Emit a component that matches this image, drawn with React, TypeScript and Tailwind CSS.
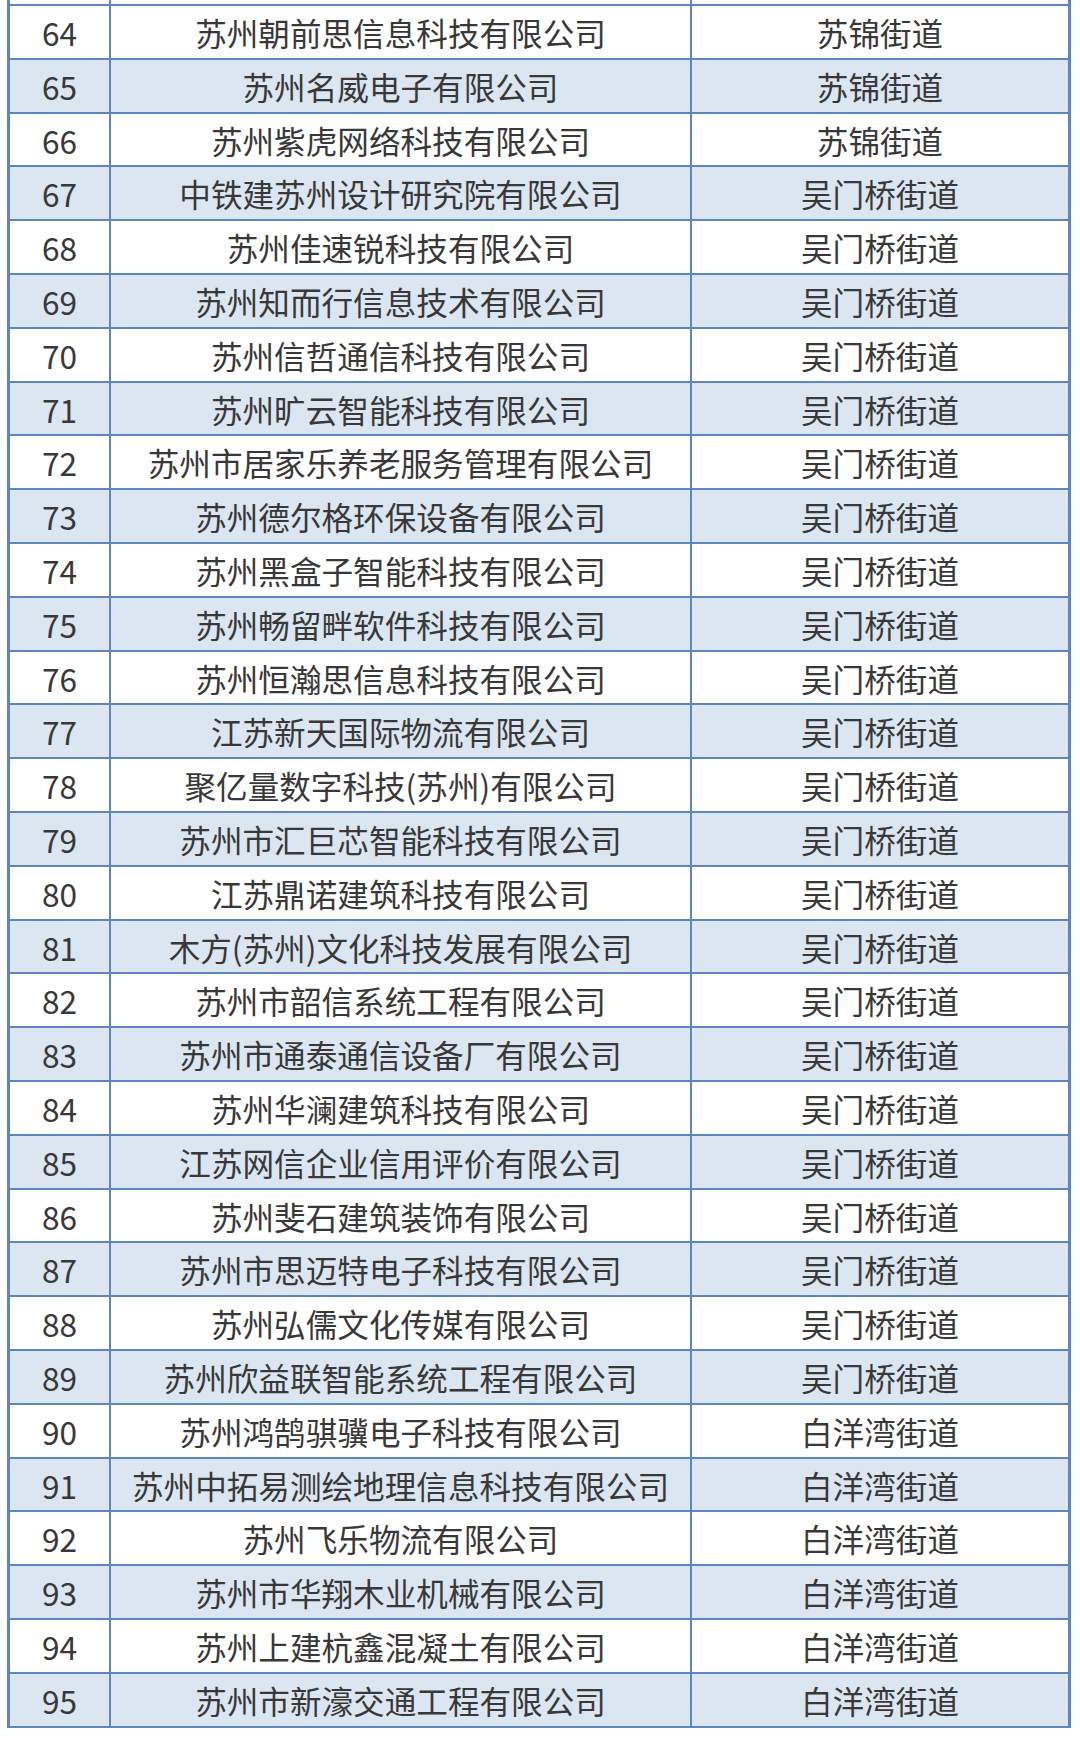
import React from "react";

interface Row {
  no: number;
  name: string;
  street: string;
}

const names: string[] = [
  "苏州朝前思信息科技有限公司",
  "苏州名威电子有限公司",
  "苏州紫虎网络科技有限公司",
  "中铁建苏州设计研究院有限公司",
  "苏州佳速锐科技有限公司",
  "苏州知而行信息技术有限公司",
  "苏州信哲通信科技有限公司",
  "苏州旷云智能科技有限公司",
  "苏州市居家乐养老服务管理有限公司",
  "苏州德尔格环保设备有限公司",
  "苏州黑盒子智能科技有限公司",
  "苏州畅留畔软件科技有限公司",
  "苏州恒瀚思信息科技有限公司",
  "江苏新天国际物流有限公司",
  "聚亿量数字科技(苏州)有限公司",
  "苏州市汇巨芯智能科技有限公司",
  "江苏鼎诺建筑科技有限公司",
  "木方(苏州)文化科技发展有限公司",
  "苏州市韶信系统工程有限公司",
  "苏州市通泰通信设备厂有限公司",
  "苏州华澜建筑科技有限公司",
  "江苏网信企业信用评价有限公司",
  "苏州斐石建筑装饰有限公司",
  "苏州市思迈特电子科技有限公司",
  "苏州弘儒文化传媒有限公司",
  "苏州欣益联智能系统工程有限公司",
  "苏州鸿鹄骐骥电子科技有限公司",
  "苏州中拓易测绘地理信息科技有限公司",
  "苏州飞乐物流有限公司",
  "苏州市华翔木业机械有限公司",
  "苏州上建杭鑫混凝土有限公司",
  "苏州市新濠交通工程有限公司",
];

const rows: Row[] = names.map((name, i) => {
  const no = 64 + i;
  let street = "吴门桥街道";
  if (no <= 66) street = "苏锦街道";
  if (no >= 90) street = "白洋湾街道";
  return { no, name, street };
});

const App: React.FC = () => {
  return (
    <div
      className="w-[1080px] h-[1742px] bg-white text-[#383838] overflow-hidden"
      style={{ fontFamily: '"Noto Sans CJK SC", "Noto Sans", sans-serif' }}
    >
      <div className="ml-[7px] w-[1064px] border-x-[3px] border-[#5b86c0]">
        <div className="h-[4px] flex">
          <div className="w-[101px] border-r-[2px] border-[#5b86c0]" />
          <div className="w-[581px] border-r-[2px] border-[#5b86c0]" />
        </div>
        <div className="border-t-[2px] border-[#5b86c0]">
          {rows.map((row) => (
            <div
              key={row.no}
              className={`flex h-[53.8px] border-b-[2px] border-[#5b86c0] text-[31.6px] leading-none ${
                row.no % 2 === 1 ? "bg-[#dce6f1]" : "bg-white"
              }`}
            >
              <div className="w-[101px] border-r-[2px] border-[#5b86c0] flex items-center justify-center pt-[2px]">
                {row.no}
              </div>
              <div className="w-[581px] border-r-[2px] border-[#5b86c0] flex items-center justify-center pt-[2px] whitespace-nowrap">
                {row.name}
              </div>
              <div className="flex-1 flex items-center justify-center pt-[2px]">
                {row.street}
              </div>
            </div>
          ))}
        </div>
      </div>
    </div>
  );
};

export default App;
